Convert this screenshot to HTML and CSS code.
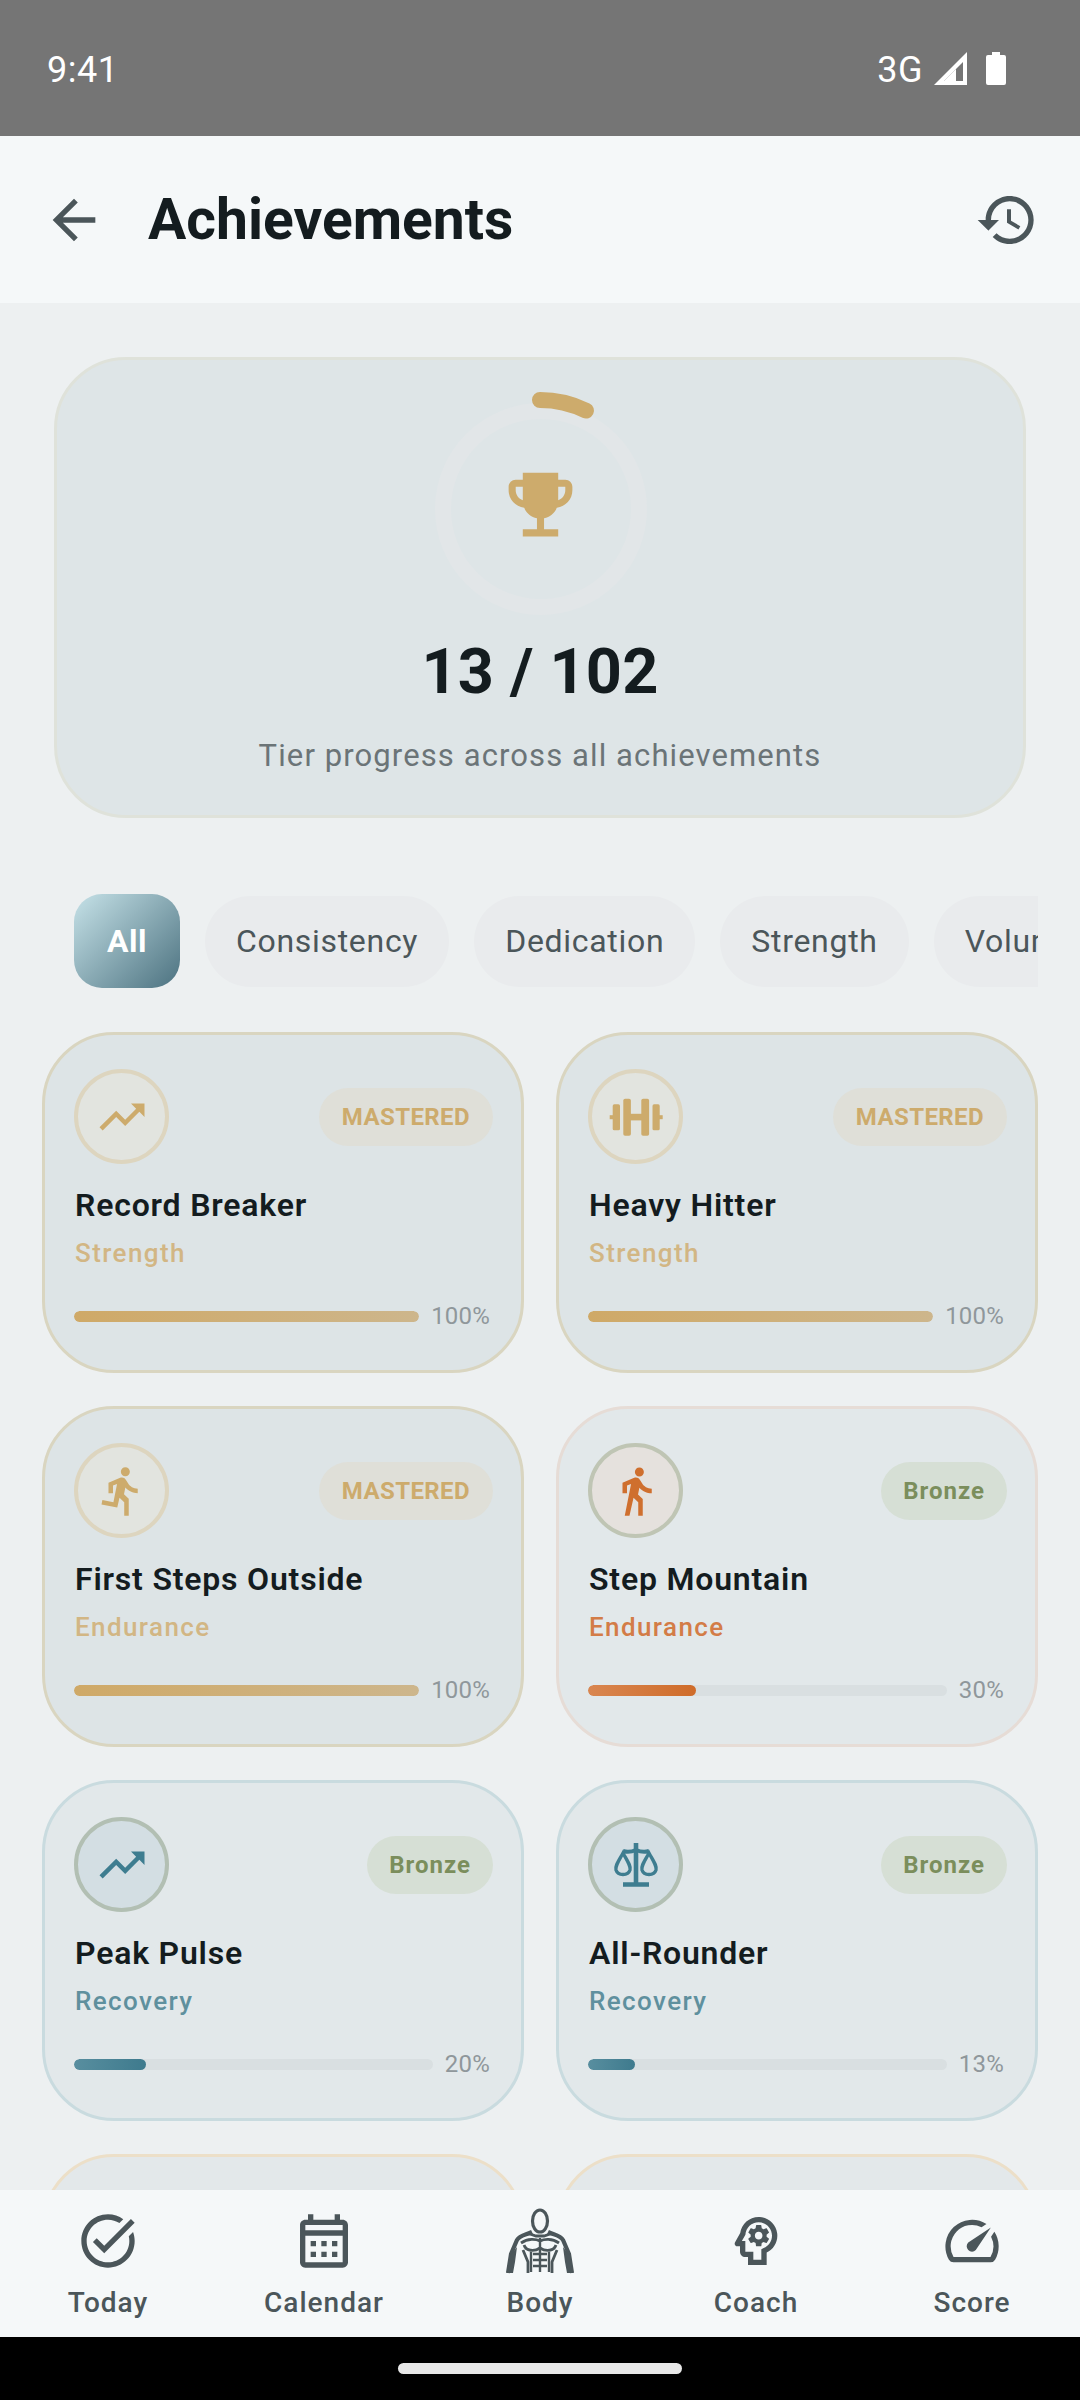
FILE: index.html
```html
<!DOCTYPE html>
<html lang="en">
<head>
    <meta charset="UTF-8">
    <meta name="viewport" content="width=device-width, initial-scale=1.0">
    <title>Achievements</title>
    <link rel="stylesheet" href="styles.css">
</head>
<body>
    <div class="status-bar">
        <span class="time">9:41</span>
        <div class="status-right">
            <span class="network">3G</span>
            <svg class="signal" viewBox="0 0 33 33"><path d="M33 0v33H0L33 0zm-4 10L10 29h19V10z"/><path d="M22 17v12H10z"/></svg>
            <svg class="battery" viewBox="0 0 20 33"><path d="M6 0h8v3h4a2 2 0 0 1 2 2v26a2 2 0 0 1-2 2H2a2 2 0 0 1-2-2V5a2 2 0 0 1 2-2h4z"/></svg>
        </div>
    </div>

    <header class="app-bar">
        <svg class="icon" viewBox="0 0 24 24"><path d="M20 11H7.83l5.59-5.59L12 4l-8 8 8 8 1.41-1.41L7.83 13H20v-2z"/></svg>
        <h1>Achievements</h1>
        <svg class="icon" viewBox="0 0 24 24"><path d="M13 3c-4.97 0-9 4.03-9 9H1l3.89 3.89.07.14L9 12H6c0-3.87 3.13-7 7-7s7 3.13 7 7-3.13 7-7 7c-1.93 0-3.68-.79-4.94-2.06l-1.42 1.42C8.27 19.99 10.51 21 13 21c4.97 0 9-4.03 9-9s-4.03-9-9-9zm-1 5v5l4.28 2.54.72-1.21-3.5-2.08V8H12z"/></svg>
    </header>

    <main class="content">
        <section class="summary">
            <div class="ring">
                <svg class="ring-svg" viewBox="0 0 240 240">
                    <circle cx="121" cy="124" r="98" class="ring-track"/>
                    <path d="M120 15A105 105 0 0 1 166 25.6" class="ring-value"/>
                </svg>
                <svg class="trophy" viewBox="0 0 24 24"><path d="M19 5h-2V3H7v2H5c-1.1 0-2 .9-2 2v1c0 2.55 1.92 4.63 4.39 4.94.63 1.5 1.98 2.63 3.61 2.96V19H7v2h10v-2h-4v-3.1c1.63-.33 2.98-1.46 3.61-2.96C19.08 12.63 21 10.55 21 8V7c0-1.1-.9-2-2-2zM5 8V7h2v3.82C5.84 10.4 5 9.3 5 8zm14 0c0 1.3-.84 2.4-2 2.82V7h2v1z"/></svg>
            </div>
            <div class="summary-count">13 / 102</div>
            <div class="summary-label">Tier progress across all achievements</div>
        </section>

        <div class="chips">
            <span class="chip active">All</span>
            <span class="chip">Consistency</span>
            <span class="chip">Dedication</span>
            <span class="chip">Strength</span>
            <span class="chip">Volume</span>
        </div>

        <div class="grid">
            <article class="card mastered">
                <div class="card-top">
                    <div class="badge-icon"><svg viewBox="0 0 24 24"><path d="M16 6l2.29 2.29-4.88 4.88-4-4L2 16.59 3.41 18l6-6 4 4 6.3-6.29L22 12V6z"/></svg></div>
                    <span class="tier">MASTERED</span>
                </div>
                <h2>Record Breaker</h2>
                <div class="category">Strength</div>
                <div class="progress">
                    <div class="track"><div class="fill" style="width: 100%"></div></div>
                    <span class="percent">100%</span>
                </div>
            </article>

            <article class="card mastered">
                <div class="card-top">
                    <div class="badge-icon">
                        <svg viewBox="0 0 54 54">
                            <rect x="14.3" y="8.7" width="7.6" height="37" rx="1.8"/>
                            <rect x="32.3" y="8.7" width="7.8" height="37" rx="1.8"/>
                            <rect x="3.7" y="14.3" width="7.3" height="26" rx="1.6"/>
                            <rect x="43.5" y="14.3" width="7.2" height="26" rx="1.6"/>
                            <rect x="0.7" y="25.2" width="4" height="4"/>
                            <rect x="49.7" y="25.2" width="4" height="4"/>
                            <rect x="21" y="23.8" width="12" height="6.6"/>
                        </svg>
                    </div>
                    <span class="tier">MASTERED</span>
                </div>
                <h2>Heavy Hitter</h2>
                <div class="category">Strength</div>
                <div class="progress">
                    <div class="track"><div class="fill" style="width: 100%"></div></div>
                    <span class="percent">100%</span>
                </div>
            </article>

            <article class="card mastered">
                <div class="card-top">
                    <div class="badge-icon"><svg viewBox="0 0 24 24"><path d="M13.49 5.48c1.1 0 2-.9 2-2s-.9-2-2-2-2 .9-2 2 .9 2 2 2zm-3.6 13.9l1-4.4 2.1 2v6h2v-7.5l-2.1-2 .6-3c1.3 1.5 3.3 2.5 5.5 2.5v-2c-1.9 0-3.5-1-4.3-2.4l-1-1.6c-.4-.6-1-1-1.7-1-.3 0-.5.1-.8.1l-5.2 2.2v4.7h2v-3.4l1.8-.7-1.6 8.1-4.9-1-.4 2 7 1.4z"/></svg></div>
                    <span class="tier">MASTERED</span>
                </div>
                <h2>First Steps Outside</h2>
                <div class="category">Endurance</div>
                <div class="progress">
                    <div class="track"><div class="fill" style="width: 100%"></div></div>
                    <span class="percent">100%</span>
                </div>
            </article>

            <article class="card endurance">
                <div class="card-top">
                    <div class="badge-icon"><svg viewBox="0 0 24 24"><path d="M13.5 5.5c1.1 0 2-.9 2-2s-.9-2-2-2-2 .9-2 2 .9 2 2 2zM9.8 8.9L7 23h2.1l1.8-8 2.1 2v6h2v-7.5l-2.1-2 .6-3C14.8 12 16.8 13 19 13v-2c-1.9 0-3.5-1-4.3-2.4l-1-1.6c-.4-.6-1-1-1.7-1-.3 0-.5.1-.8.1L6 8.3V13h2V9.6l1.8-.7z"/></svg></div>
                    <span class="tier">Bronze</span>
                </div>
                <h2>Step Mountain</h2>
                <div class="category">Endurance</div>
                <div class="progress">
                    <div class="track"><div class="fill" style="width: 30%"></div></div>
                    <span class="percent">30%</span>
                </div>
            </article>

            <article class="card recovery">
                <div class="card-top">
                    <div class="badge-icon"><svg viewBox="0 0 24 24"><path d="M16 6l2.29 2.29-4.88 4.88-4-4L2 16.59 3.41 18l6-6 4 4 6.3-6.29L22 12V6z"/></svg></div>
                    <span class="tier">Bronze</span>
                </div>
                <h2>Peak Pulse</h2>
                <div class="category">Recovery</div>
                <div class="progress">
                    <div class="track"><div class="fill" style="width: 20%"></div></div>
                    <span class="percent">20%</span>
                </div>
            </article>

            <article class="card recovery">
                <div class="card-top">
                    <div class="badge-icon">
                        <svg class="scale" viewBox="0 0 54 54">
                            <path d="M27 5V46M14 46.5H40" stroke-width="4.6"/>
                            <path d="M14 13Q20 15 27 12 34 15 40 13" stroke-width="4"/>
                            <path d="M14 15C9 24 6 28 7 32 9 38 19 38 21 32 22 28 19 24 14 15ZM40 15C35 24 32 28 33 32 35 38 45 38 47 32 48 28 45 24 40 15Z" stroke-width="3.4"/>
                        </svg>
                    </div>
                    <span class="tier">Bronze</span>
                </div>
                <h2>All-Rounder</h2>
                <div class="category">Recovery</div>
                <div class="progress">
                    <div class="track"><div class="fill" style="width: 13%"></div></div>
                    <span class="percent">13%</span>
                </div>
            </article>

            <article class="card locked"></article>
            <article class="card locked"></article>
        </div>
    </main>

    <nav class="bottom-nav">
        <div class="nav-item">
            <svg class="icon" viewBox="0 0 24 24"><path d="M22 5.18L10.59 16.6l-4.24-4.24 1.41-1.41 2.83 2.83 10-10L22 5.18zm-2.21 5.04c.13.57.21 1.17.21 1.78 0 4.42-3.58 8-8 8s-8-3.58-8-8 3.58-8 8-8c1.58 0 3.04.46 4.28 1.25l1.44-1.44C16.1 2.67 14.13 2 12 2 6.48 2 2 6.48 2 12s4.48 10 10 10 10-4.48 10-10c0-1.19-.22-2.33-.6-3.39l-1.61 1.61z"/></svg>
            <span>Today</span>
        </div>
        <div class="nav-item">
            <svg class="icon" viewBox="0 0 24 24"><path d="M19 4h-1V2h-2v2H8V2H6v2H5c-1.11 0-1.99.9-1.99 2L3 20c0 1.1.89 2 2 2h14c1.1 0 2-.9 2-2V6c0-1.1-.9-2-2-2zm0 16H5V10h14v10zm0-12H5V6h14v2zM9 14H7v-2h2v2zm4 0h-2v-2h2v2zm4 0h-2v-2h2v2zm-8 4H7v-2h2v2zm4 0h-2v-2h2v2zm4 0h-2v-2h2v2z"/></svg>
            <span>Calendar</span>
        </div>
        <div class="nav-item">
            <svg class="body-icon" viewBox="18 9 64 64">
                <ellipse cx="50" cy="21" rx="7.5" ry="11"/>
                <path d="M42 32C36 35 30 35 27 40L21 54 18 73M58 32C64 35 70 35 73 40L79 54 82 73" stroke-width="4.2"/>
                <path d="M40 34 46 36H54L60 34M31 43C38 38 46 39 50 41 54 39 62 38 69 43M34 45C36 51 44 52 50 48 56 52 64 51 66 45M33 50 38 62V73M67 50 62 62V73" stroke-width="2.8"/>
                <path d="M50 38V72M43 54H57M43 60H57M43 66H57M41 52V72M59 52V72" stroke-width="2.4"/>
                <path class="body-fill" d="M17 73 20 56 27 47 25 62 23 73ZM83 73 80 56 73 47 75 62 77 73Z"/>
            </svg>
            <span>Body</span>
        </div>
        <div class="nav-item">
            <svg class="icon" viewBox="0 0 24 24"><path d="M15.82 7.22l-1 .4c-.21-.16-.43-.29-.67-.39L14 6.17c-.02-.1-.1-.17-.2-.17h-1.6c-.1 0-.18.07-.19.17l-.15 1.06c-.24.1-.47.23-.67.39l-1-.4c-.09-.03-.2 0-.24.09l-.8 1.38c-.05.09-.03.2.05.26l.85.66c-.03.12-.05.26-.05.39s.01.26.03.39l-.84.66c-.08.06-.1.17-.05.25l.8 1.39c.05.09.15.12.25.09l.99-.4c.21.16.43.29.68.39l.14 1.06c.02.1.1.17.2.17h1.6c.1 0 .18-.07.2-.17l.15-1.06c.24-.1.47-.23.67-.39l.99.4c.09.04.2 0 .24-.09l.8-1.39c.05-.09.03-.19-.05-.25l-.83-.66c.02-.13.02-.26.02-.39 0-.14-.01-.27-.03-.39l.85-.66c.08-.06.1-.17.05-.26l-.8-1.38c-.05-.09-.16-.12-.25-.09zM13 11.43c-.79 0-1.43-.64-1.43-1.43s.64-1.43 1.43-1.43 1.43.64 1.43 1.43-.64 1.43-1.43 1.43z"/><path d="M19.94 9.06c-.43-3.27-3.23-5.86-6.53-6.05C13.27 3 13.14 3 13 3 9.47 3 6.57 5.61 6.08 9l-1.93 3.48c-.41.66.07 1.52.85 1.52h1v2c0 1.1.9 2 2 2h1v3h7v-4.68c2.62-1.25 4.35-4.08 3.94-7.26zm-5.05 5.57l-.89.42V19h-3v-3H8v-4H6.7l1.33-2.33C8.21 7.06 10.35 5 13 5c2.76 0 5 2.24 5 5 0 2.09-1.29 3.88-3.11 4.63z"/></svg>
            <span>Coach</span>
        </div>
        <div class="nav-item">
            <svg class="icon" viewBox="0 0 24 24"><path d="M20.38 8.57l-1.23 1.85a8 8 0 0 1-.22 7.58H5.07A8 8 0 0 1 15.58 6.85l1.85-1.23A10 10 0 0 0 3.35 19a2 2 0 0 0 1.72 1h13.85a2 2 0 0 0 1.74-1 10 10 0 0 0-.27-10.44z"/><path d="M10.59 15.41a2 2 0 0 0 2.83 0l5.66-8.49-8.49 5.66a2 2 0 0 0 0 2.83z"/></svg>
            <span>Score</span>
        </div>
    </nav>

    <div class="gesture-bar"><div class="gesture-pill"></div></div>
</body>
</html>
```

FILE: styles.css
```css
* {
    box-sizing: border-box;
}
body {
    margin: 0;
    width: 1080px;
    height: 2400px;
    overflow: hidden;
    display: flex;
    flex-direction: column;
    font-family: Roboto, "Noto Sans", sans-serif;
    background-color: #edf0f1;
    color: #141c1f;
}

/* status bar */
.status-bar {
    height: 136px;
    flex-shrink: 0;
    background-color: #757575;
    color: #fff;
    padding: 0 74px 0 47px;
    display: flex;
    justify-content: space-between;
    align-items: center;
    font-size: 36px;
}
.time,
.network {
    margin-top: 3px;
    letter-spacing: 0.5px;
}
.status-right {
    display: flex;
    align-items: center;
    gap: 11px;
}
.signal {
    width: 33px;
    height: 33px;
    fill: #fff;
}
.battery {
    width: 20px;
    height: 33px;
    margin-left: 8px;
    fill: #fff;
}

/* app bar */
.app-bar {
    height: 167px;
    flex-shrink: 0;
    background-color: #f5f8f9;
    padding: 0 41px 0 42px;
    display: flex;
    align-items: center;
}
.app-bar h1 {
    flex: 1;
    margin: 0 0 0 42px;
    font-size: 57px;
    font-weight: 700;
}
.icon {
    width: 64px;
    height: 64px;
    fill: #4b565a;
    flex-shrink: 0;
}

.content {
    flex: 1;
    min-height: 0;
    overflow: hidden;
    padding-top: 54px;
}

/* summary card */
.summary {
    margin: 0 54px;
    height: 461px;
    padding-top: 25px;
    border: 3px solid #dfe2da;
    border-radius: 72px;
    background-color: #dee5e7;
    text-align: center;
}
.ring {
    position: relative;
    width: 240px;
    height: 240px;
    margin: 0 auto;
}
.ring-svg {
    display: block;
    width: 240px;
    height: 240px;
    fill: none;
    stroke-width: 16;
}
.ring-track {
    stroke: #e2e6e8;
}
.ring-value {
    stroke: #cdab6c;
    stroke-linecap: round;
}
.trophy {
    position: absolute;
    left: 78px;
    top: 77px;
    width: 85px;
    height: 85px;
    fill: #cdab6c;
}
.summary-count {
    margin-top: 11px;
    font-size: 63px;
    line-height: 72px;
    font-weight: 700;
    letter-spacing: 0.2px;
}
.summary-label {
    margin-top: 28px;
    font-size: 31px;
    line-height: 40px;
    letter-spacing: 1.1px;
    color: #6b7477;
}

/* filter chips */
.chips {
    margin: 76px 42px 0;
    padding-left: 32px;
    display: flex;
    align-items: center;
    gap: 25px;
    overflow: hidden;
}
.chip {
    flex-shrink: 0;
    height: 91px;
    padding: 0 31px;
    border-radius: 46px;
    background-color: #e9ebed;
    color: #4b565a;
    font-size: 32px;
    line-height: 91px;
    letter-spacing: 0.7px;
}
.chip.active {
    height: 94px;
    padding: 0 33px;
    border-radius: 28px;
    background-image: linear-gradient(135deg, #c6e2e8, #4c7280);
    color: #fff;
    font-weight: 700;
    line-height: 94px;
    letter-spacing: 0.5px;
}

/* achievement grid */
.grid {
    margin: 44px 42px 0;
    display: grid;
    grid-template-columns: 482px 482px;
    grid-auto-rows: 341px;
    column-gap: 32px;
    row-gap: 33px;
}
.card {
    padding: 34px 28px 34px 29px;
    border: 3px solid #d9d5c0;
    border-radius: 72px;
    background-color: #dde4e6;
}
.card-top {
    display: flex;
    justify-content: space-between;
    align-items: center;
}
.badge-icon {
    width: 95px;
    height: 95px;
    border: 4px solid #ddd5bf;
    border-radius: 50%;
    background-color: #e2e4df;
    display: flex;
    align-items: center;
    justify-content: center;
}
.badge-icon svg {
    width: 54px;
    height: 54px;
    fill: #cdab6c;
}
.tier {
    height: 58px;
    padding: 0 22px;
    border-radius: 29px;
    background-color: #dfdfd8;
    color: #cdab6c;
    font-size: 24px;
    font-weight: 700;
    line-height: 58px;
    letter-spacing: 1px;
}
.mastered .tier {
    padding: 0 23px;
    letter-spacing: 0.4px;
}
.card h2 {
    margin: 21px 0 0 1px;
    font-size: 32px;
    line-height: 40px;
    font-weight: 600;
    letter-spacing: 0.8px;
}
.category {
    margin: 12px 0 0 1px;
    font-size: 26px;
    line-height: 32px;
    font-weight: 500;
    letter-spacing: 1.4px;
    color: #d2b684;
}
.progress {
    margin-top: 32px;
    padding-right: 3px;
    height: 30px;
    display: flex;
    align-items: center;
    gap: 12px;
}
.track {
    flex: 1;
    height: 11px;
    border-radius: 6px;
    background-color: #d9dfe1;
    overflow: hidden;
}
.fill {
    height: 100%;
    border-radius: 6px;
    background-image: linear-gradient(90deg, #cfa967, #cdb68c);
}
.percent {
    font-size: 24px;
    letter-spacing: 0.2px;
    color: #8f979b;
}

.endurance,
.recovery {
    background-color: #e2e8ea;
}
.endurance {
    border-color: #e6dcd6;
}
.recovery {
    border-color: #c9dbdf;
}
.endurance .tier,
.recovery .tier {
    background-color: #d6dfd5;
    color: #7b8e5c;
}
.endurance .badge-icon {
    background-color: #e5e1dd;
    border-color: #bfc5b4;
}
.endurance .badge-icon svg {
    fill: #cf6f2e;
}
.endurance .category {
    color: #d37c47;
}
.endurance .fill {
    background-image: linear-gradient(90deg, #d98650, #cf6c2a);
}
.recovery .badge-icon {
    background-color: #d3dee3;
    border-color: #b2bfb3;
}
.recovery .badge-icon svg {
    fill: #3e7d90;
}
.recovery .badge-icon svg.scale {
    fill: none;
    stroke: #3e7d90;
}
.recovery .category {
    color: #5f909e;
}
.recovery .fill {
    background-image: linear-gradient(90deg, #588e9f, #3e7a8d);
}
.locked {
    background-color: #e3e8ea;
    border-color: #ecdfc8;
}

/* bottom navigation */
.bottom-nav {
    height: 147px;
    flex-shrink: 0;
    background-color: #f5f8f9;
    padding-top: 19px;
    display: grid;
    grid-template-columns: repeat(5, 1fr);
}
.nav-item {
    display: flex;
    flex-direction: column;
    align-items: center;
    gap: 12px;
    font-size: 28px;
    line-height: 36px;
    font-weight: 500;
    letter-spacing: 1px;
    color: #4b565a;
}
.body-icon {
    width: 64px;
    height: 64px;
    overflow: visible;
    fill: none;
    stroke: #4b565a;
    stroke-width: 3.2;
}
.body-fill {
    fill: #4b565a;
    stroke: none;
}

.gesture-bar {
    height: 63px;
    flex-shrink: 0;
    background-color: #000;
    padding-top: 26px;
}
.gesture-pill {
    width: 284px;
    height: 11px;
    margin: 0 auto;
    border-radius: 6px;
    background-color: #e8e8e8;
}
```
